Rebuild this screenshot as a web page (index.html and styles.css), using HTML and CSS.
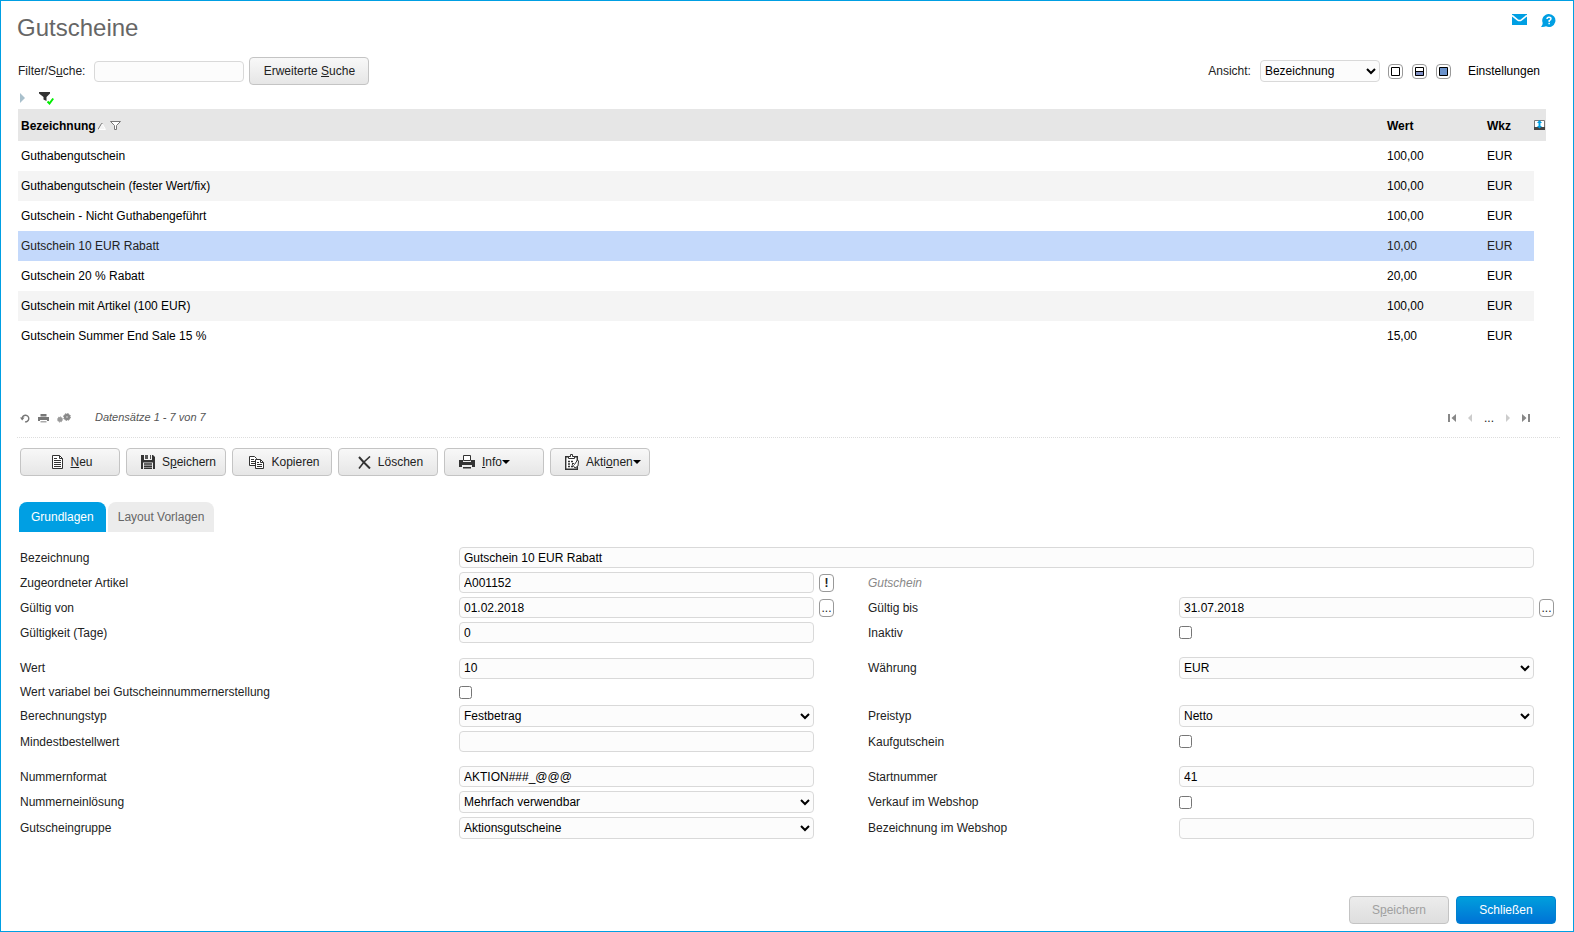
FILE: index.html
```html
<!DOCTYPE html>
<html lang="de">
<head>
  <meta charset="UTF-8">
  <title>Gutscheine</title>
  <meta name="viewport" content="width=device-width, initial-scale=1.0">
  <link rel="stylesheet" href="styles.css">
</head>
<body>
  <header class="page-head">
    <h1>Gutscheine</h1>
    <div class="head-icons">
      <a href="#" aria-label="Nachricht">
        <svg width="15" height="11" viewBox="0 0 15 11"><path fill="#009fe3" d="M0 0h15v11H0z"/><path fill="none" stroke="#fff" stroke-width="1.600" d="M0 1.500l5.500 4.300q2 1.400 4 0L15 1.500"/></svg>
      </a>
      <a href="#" aria-label="Hilfe">
        <svg width="15" height="14" viewBox="0 0 15 14"><path fill="#009fe3" d="M8 0a6.500 6.500 0 1 1-3 12.300Q3 13.300 0 13q1.700-1.500 1.700-4A6.500 6.500 0 0 1 8 0z"/><path fill="none" stroke="#fff" stroke-width="1.400" d="M6 5q0-1.800 2-1.800t2 1.600Q10 6 8.200 6.600V8"/><path fill="#fff" d="M7.400 8.800h1.500v1.500H7.400z"/></svg>
      </a>
    </div>
  </header>

  <div class="search-bar">
    <label for="filter">Filter/S<u>u</u>che:</label>
    <input type="text" id="filter" class="search-input">
    <button type="button" class="button search-button">Erweiterte <u>S</u>uche</button>
    <div class="view-options">
      <label for="view">Ansicht:</label>
      <select id="view" class="view-select"><option>Bezeichnung</option></select>
      <button type="button" class="view-button" aria-label="Nur Liste">
        <svg width="9" height="9" viewBox="0 0 9 9"><path fill="#fff" stroke="#000" d="M.5.5h8v8h-8z"/></svg>
      </button>
      <button type="button" class="view-button" aria-label="Geteilt">
        <svg width="9" height="9" viewBox="0 0 9 9"><path fill="#fff" d="M0 0h9v5H0z"/><path fill="#7f8fc4" d="M0 5h9v4H0z"/><path fill="none" stroke="#000" d="M.5.5h8v8h-8zM0 4.500h9"/></svg>
      </button>
      <button type="button" class="view-button" aria-label="Nur Details">
        <svg width="9" height="9" viewBox="0 0 9 9"><path fill="#6b93cc" stroke="#000" d="M.5.5h8v8h-8z"/></svg>
      </button>
      <a href="#" class="settings">Einstellungen</a>
    </div>
  </div>

  <div class="filter-row">
    <svg width="5" height="10" viewBox="0 0 5 10"><path fill="#a9c0cc" d="M0 0l5 5-5 5z"/></svg>
    <svg width="15" height="13" viewBox="0 0 15 13"><path fill="#333" d="M0 0h11v1.500L7.500 5v4l-3-1.500V5L0 1.500z"/><path fill="none" stroke="#0e0" stroke-width="2" d="M8.500 9.500l2 2 3.700-5"/></svg>
  </div>

  <div class="list">
    <table class="voucher-table">
      <thead>
        <tr>
          <th>Bezeichnung<svg class="sort" width="8" height="7" viewBox="0 0 8 7"><path fill="#f4f4f4" stroke="#fff" d="M.5 6.500l3.500-6 3.500 6z"/><path fill="none" stroke="#777" d="M0 6.500L3.500.5h1"/></svg><svg class="funnel" width="11" height="9" viewBox="0 0 11 9"><path fill="#fff" stroke="#777" d="M.5.5h10L6.500 4.500v4h-2v-4z"/></svg></th>
          <th class="col-value">Wert</th>
          <th class="col-currency">Wkz</th>
          <th class="col-tool">
            <svg width="11" height="10" viewBox="0 0 11 10"><path fill="#fff" stroke="#777" d="M.5.5h10v9H.5z"/><path fill="#444" d="M0 7h11v3H0z"/><path fill="#009fe3" d="M5.500 0L8 3H6.500v3H8L5.500 8.500 3 6h1.500V3H3z"/></svg>
          </th>
        </tr>
      </thead>
      <tbody>
        <tr><td>Guthabengutschein</td><td>100,00</td><td>EUR</td></tr>
        <tr><td>Guthabengutschein (fester Wert/fix)</td><td>100,00</td><td>EUR</td></tr>
        <tr><td>Gutschein - Nicht Guthabengeführt</td><td>100,00</td><td>EUR</td></tr>
        <tr class="selected"><td>Gutschein 10 EUR Rabatt</td><td>10,00</td><td>EUR</td></tr>
        <tr><td>Gutschein 20 % Rabatt</td><td>20,00</td><td>EUR</td></tr>
        <tr><td>Gutschein mit Artikel (100 EUR)</td><td>100,00</td><td>EUR</td></tr>
        <tr><td>Gutschein Summer End Sale 15 %</td><td>15,00</td><td>EUR</td></tr>
      </tbody>
    </table>
  </div>

  <div class="pager">
    <div class="pager-tools">
      <svg width="10" height="9" viewBox="0 0 10 9"><path fill="none" stroke="#777" stroke-width="1.400" d="M2.200 4.500A3.300 3.300 0 1 1 5 7.800"/><path fill="#777" d="M0 3.500h4.500L2.200 6.500z"/></svg>
      <svg width="11" height="9" viewBox="0 0 11 9"><path fill="#777" d="M2.500 0h6v2.500h-6zM0 3h11v4H9V6H2v1H0z"/><path fill="#aaa" d="M2.500 7h6v1.500h-6z"/></svg>
      <svg width="14" height="10" viewBox="0 0 14 10"><circle cx="3" cy="6.500" r="2.400" fill="#999"/><circle cx="3" cy="6.500" r="2.600" fill="none" stroke="#999" stroke-dasharray="1 1"/><circle cx="10" cy="4" r="3.200" fill="#888"/><circle cx="10" cy="4" r="3.500" fill="none" stroke="#888" stroke-dasharray="1.400 1.350"/><circle cx="10" cy="4" r="1" fill="#bbb"/></svg>
    </div>
    <span class="pager-count">Datensätze 1 - 7 von 7</span>
    <div class="pager-nav">
      <svg width="8" height="8" viewBox="0 0 8 8"><path fill="#888" d="M0 0h2v8H0zM8 0v8L3.500 4z"/></svg>
      <svg width="4" height="8" viewBox="0 0 4 8"><path fill="#ccc" d="M4 0v8L0 4z"/></svg>
      <span>...</span>
      <svg width="4" height="8" viewBox="0 0 4 8"><path fill="#ccc" d="M0 0v8l4-4z"/></svg>
      <svg width="8" height="8" viewBox="0 0 8 8"><path fill="#888" d="M6 0h2v8H6zM0 0v8l4.500-4z"/></svg>
    </div>
  </div>

  <div class="toolbar">
    <button type="button" class="button">
      <svg width="11" height="14" viewBox="0 0 11 14"><path fill="#fff" stroke="#333" d="M.5.5h7l3 3v10H.5z"/><path fill="none" stroke="#333" d="M7.500.5v3h3M2 5.500h7M2 7.500h7M2 9.500h7M2 11.500h7M2 3.500h3"/></svg>
      <span><u>N</u>eu</span>
    </button>
    <button type="button" class="button">
      <svg width="14" height="14" viewBox="0 0 14 14"><path fill="#333" d="M0 0h3v5h8V0h1l2 2v12h-2V7.500H2V14H0z"/><path fill="#555" d="M4 0h3v4H4zM9 0h1v4H9z"/><path fill="none" stroke="#333" stroke-width="1.500" d="M3 9h8M3 11.200h8M3 13.300h8"/></svg>
      <span>S<u>p</u>eichern</span>
    </button>
    <button type="button" class="button">
      <svg width="15" height="13" viewBox="0 0 15 13"><path fill="#fff" stroke="#333" d="M.5.5h5l2 2v7h-7z"/><path fill="none" stroke="#333" d="M2 3.500h3M2 5.500h4M2 7.500h4"/><path fill="#fff" stroke="#333" d="M6.500 3.500h5l3 3v6h-8z"/><path fill="none" stroke="#333" d="M11.500 3.500v3h3M8 6.500h2M8 8.500h5M8 10.500h5"/></svg>
      <span>Kopieren</span>
    </button>
    <button type="button" class="button">
      <svg width="13" height="13" viewBox="0 0 13 13"><path fill="none" stroke="#333" stroke-width="2" d="M1 1l4.500 5L12 12.500"/><path fill="none" stroke="#333" stroke-width="1.600" d="M12 .5L6 6 1 12.500"/></svg>
      <span>Löschen</span>
    </button>
    <button type="button" class="button start">
      <svg width="16" height="14" viewBox="0 0 16 14"><path fill="#fff" stroke="#333" d="M4.500.5h7v5h-7z"/><path fill="#333" d="M0 5h4v2h8V5h4v7h-3v-2H3v2H0z"/><path fill="#333" d="M4 12h8v1.500H4z"/></svg>
      <span class="menu-label"><u>I</u>nfo<svg width="8" height="4" viewBox="0 0 8 4"><path d="M0 0h8L4 4z"/></svg></span>
    </button>
    <button type="button" class="button start">
      <svg width="14" height="16" viewBox="0 0 14 16"><path fill="#fff" stroke="#333" stroke-width="1.400" d="M.7 2.700h11.600v12.600H.7z"/><path fill="#fff" stroke="#333" d="M3.500 4.500v-2h2v-2h2v2h2v2z"/><path fill="none" stroke="#333" stroke-width="1.400" d="M3 7.500h2M6 7.500h2M3 10h2M3 12.500h2M6 12.500h2"/><path fill="#fff" stroke="#333" d="M7 10l1-1 1.500 1.500 3-4.500 1 1-.5 5-3 2z"/></svg>
      <span class="menu-label">Akti<u>o</u>nen<svg width="8" height="4" viewBox="0 0 8 4"><path d="M0 0h8L4 4z"/></svg></span>
    </button>
  </div>

  <nav class="tabs">
    <a href="#" class="tab active">Grundlagen</a>
    <a href="#" class="tab">Layout Vorlagen</a>
  </nav>

  <form class="details" id="voucher-form">
    <div class="row">
      <label for="name">Bezeichnung</label>
      <div class="field wide"><input type="text" id="name" value="Gutschein 10 EUR Rabatt"></div>
    </div>
    <div class="row">
      <label for="article">Zugeordneter Artikel</label>
      <div class="field"><input type="text" id="article" value="A001152"><button type="button" class="mini strong">!</button></div>
      <span class="hint">Gutschein</span>
    </div>
    <div class="row">
      <label for="valid-from">Gültig von</label>
      <div class="field"><input type="text" id="valid-from" value="01.02.2018"><button type="button" class="mini">...</button></div>
      <label for="valid-to">Gültig bis</label>
      <div class="field"><input type="text" id="valid-to" value="31.07.2018"><button type="button" class="mini">...</button></div>
    </div>
    <div class="row">
      <label for="days">Gültigkeit (Tage)</label>
      <div class="field"><input type="text" id="days" value="0"></div>
      <label for="inactive">Inaktiv</label>
      <div class="field"><input type="checkbox" id="inactive"></div>
    </div>

    <div class="row group">
      <label for="value">Wert</label>
      <div class="field"><input type="text" id="value" value="10"></div>
      <label for="currency">Währung</label>
      <div class="field"><select id="currency"><option>EUR</option></select></div>
    </div>
    <div class="row low">
      <label for="variable">Wert variabel bei Gutscheinnummernerstellung</label>
      <div class="field"><input type="checkbox" id="variable"></div>
    </div>
    <div class="row">
      <label for="calc">Berechnungstyp</label>
      <div class="field"><select id="calc"><option>Festbetrag</option></select></div>
      <label for="price">Preistyp</label>
      <div class="field"><select id="price"><option>Netto</option></select></div>
    </div>
    <div class="row">
      <label for="minimum">Mindestbestellwert</label>
      <div class="field"><input type="text" id="minimum"></div>
      <label for="purchase">Kaufgutschein</label>
      <div class="field"><input type="checkbox" id="purchase"></div>
    </div>

    <div class="row group">
      <label for="format">Nummernformat</label>
      <div class="field"><input type="text" id="format" value="AKTION###_@@@"></div>
      <label for="start">Startnummer</label>
      <div class="field"><input type="text" id="start" value="41"></div>
    </div>
    <div class="row">
      <label for="redeem">Nummerneinlösung</label>
      <div class="field"><select id="redeem"><option>Mehrfach verwendbar</option></select></div>
      <label for="shop">Verkauf im Webshop</label>
      <div class="field"><input type="checkbox" id="shop"></div>
    </div>
    <div class="row">
      <label for="group">Gutscheingruppe</label>
      <div class="field"><select id="group"><option>Aktionsgutscheine</option></select></div>
      <label for="shop-name">Bezeichnung im Webshop</label>
      <div class="field"><input type="text" id="shop-name"></div>
    </div>
  </form>

  <footer class="page-foot">
    <button type="submit" form="voucher-form" class="button" disabled>S<u>p</u>eichern</button>
    <button type="button" class="button primary">Schließen</button>
  </footer>
</body>
</html>
```
FILE: styles.css
```css
* {
  box-sizing: border-box;
}

body {
  display: flex;
  flex-direction: column;
  min-height: 100vh;
  margin: 0;
  border: 1px solid #009fe3;
  background: #fff;
  color: #222;
  font-family: "Liberation Sans", Arial, Helvetica, sans-serif;
  font-size: 12px;
  line-height: 16px;
}

svg {
  display: block;
  flex: none;
}

a {
  color: #000;
  text-decoration: none;
}

input,
select,
button {
  font: inherit;
  color: #000;
}

input[type="text"],
select {
  min-width: 0;
  height: 21px;
  padding: 0 4px;
  border: 1px solid #d9d9d9;
  border-radius: 4px;
  background: #fcfcfc;
}

select {
  height: 22px;
  padding: 0 1px 0 0;
}

input[type="checkbox"] {
  width: 13px;
  height: 13px;
  margin: 0;
}

.button {
  display: flex;
  align-items: center;
  justify-content: center;
  gap: 7px;
  width: 100px;
  height: 28px;
  padding: 0 7px 0 12px;
  border: 1px solid #c4c4c4;
  border-radius: 4px;
  background: linear-gradient(#f8f8f8, #e6e6e6);
  color: #222;
}

.button.start {
  justify-content: flex-start;
  padding-left: 14px;
}

.button:disabled {
  display: block;
  padding: 0;
  background: linear-gradient(#ececec, #dedede);
  color: #a0a0a0;
}

.button.primary {
  padding: 0;
  border-color: #0082d0;
  background: linear-gradient(#009fdc, #0073d6);
  color: #fff;
}

/* head */
.page-head {
  display: flex;
  justify-content: space-between;
  padding: 12px 17px 0 16px;
}

h1 {
  margin: 0;
  color: #666;
  font-size: 24px;
  font-weight: normal;
  line-height: 30px;
}

.head-icons {
  display: flex;
  gap: 14px;
  padding-top: 1px;
}

.search-bar {
  display: flex;
  align-items: center;
  margin-top: 14px;
  padding: 0 33px 0 17px;
}

.search-input {
  width: 150px;
  margin: 0 5px 0 9px;
}

.search-button {
  display: block;
  width: 120px;
  padding: 0;
}

.view-options {
  display: flex;
  align-items: center;
  margin-left: auto;
}

.view-select {
  width: 120px;
  margin: 0 8px 0 9px;
}

.view-button {
  display: flex;
  align-items: center;
  justify-content: center;
  width: 15px;
  height: 15px;
  margin-right: 9px;
  padding: 0;
  border: 1px solid #999;
  border-radius: 4px;
  background: #fff;
}

.settings {
  margin-left: 8px;
}

.filter-row {
  display: flex;
  align-items: center;
  gap: 14px;
  height: 24px;
  padding: 2px 0 0 19px;
}

/* list */
.list {
  min-height: 298px;
  padding: 0 27px 0 17px;
}

.voucher-table {
  width: 100%;
  border-collapse: collapse;
  table-layout: fixed;
  color: #000;
}

.voucher-table th {
  height: 32px;
  padding: 2px 3px 0;
  background: #e6e6e6;
  text-align: left;
}

.voucher-table th svg {
  display: inline-block;
}

.voucher-table .sort {
  margin-left: 2px;
}

.voucher-table .funnel {
  margin-left: 4px;
}

.voucher-table .col-value {
  width: 100px;
}

.voucher-table .col-currency {
  width: 50px;
}

.voucher-table .col-tool {
  width: 12px;
  padding: 0;
}

.voucher-table .col-tool svg {
  display: block;
}

.voucher-table td {
  height: 30px;
  padding: 0 3px;
}

.voucher-table tbody tr:nth-child(even) td {
  background: #f4f4f4;
}

.voucher-table tbody tr.selected td {
  background: #c4d9fb;
  color: #222;
}

/* pager */
.pager {
  display: flex;
  align-items: center;
  height: 31px;
  margin: 0 13px 0 16px;
  padding: 0 30px 10px 3px;
  border-bottom: 1px dotted #ddd;
}

.pager-tools {
  display: flex;
  align-items: center;
  gap: 8px;
  padding-top: 2px;
}

.pager-count {
  margin-left: 24px;
  color: #555;
  font-size: 11px;
  font-style: italic;
}

.pager-nav {
  display: flex;
  align-items: center;
  gap: 12px;
  margin-left: auto;
  padding-top: 2px;
}

.toolbar {
  display: flex;
  gap: 6px;
  padding: 10px 19px 0;
}

.menu-label {
  display: flex;
  align-items: center;
}

/* tabs */
.tabs {
  display: flex;
  gap: 2px;
  margin-top: 26px;
  padding: 0 18px;
}

.tab {
  padding: 7px 10px;
  border-radius: 8px 8px 0 0;
  background: #ececec;
  color: #666;
}

.tab.active {
  padding: 7px 12px;
  background: #009fe3;
  color: #fff;
}

/* form */
.details {
  padding: 13px 19px 0;
}

.row {
  display: grid;
  grid-template-columns: 439fr 409fr 311fr 375fr;
  align-items: center;
  padding: 2px 0;
}

.row.group {
  margin-top: 10px;
}

.row.low {
  padding: 1px 0;
}

.field {
  display: grid;
  grid-template-columns: minmax(0, 1fr) 15px;
  gap: 5px;
  align-items: center;
  min-height: 21px;
  margin-right: 34px;
}

.field:last-child,
.field.wide {
  margin-right: 0;
}

.row.low .field {
  min-height: 20px;
  margin-right: 34px;
}

.field.wide {
  grid-column: 2 / -1;
}

.mini {
  width: 15px;
  height: 18px;
  padding: 0;
  border: 1px solid #999;
  border-radius: 4px;
  background: #fff;
  color: #222;
  line-height: 14px;
}

.mini.strong {
  font-weight: bold;
}

.hint {
  color: #888;
  font-style: italic;
}

/* footer */
.page-foot {
  display: flex;
  justify-content: flex-end;
  gap: 7px;
  margin-top: auto;
  padding: 16px 17px 7px;
}
```
